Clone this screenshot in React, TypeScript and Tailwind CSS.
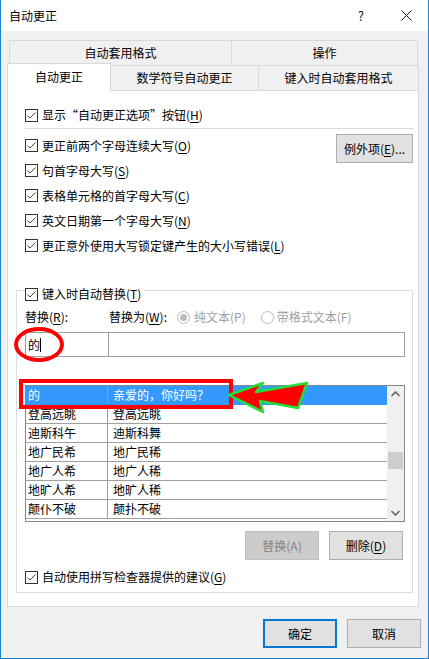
import React from 'react';

const rows: [string, string][] = [
  ['的', '亲爱的，你好吗？'],
  ['登高远眺', '登高远眺'],
  ['迪斯科午', '迪斯科舞'],
  ['地广民希', '地广民稀'],
  ['地广人希', '地广人稀'],
  ['地旷人希', '地旷人稀'],
  ['颠仆不破', '颠扑不破'],
];

function Check() {
  return (
    <span className="w-[13px] h-[13px] border border-[#333333] bg-white flex items-center justify-center shrink-0">
      <svg width="11" height="11" viewBox="0 0 11 11">
        <path d="M1.5 5.5 L4 8 L9.5 2.5" stroke="#444444" strokeWidth="1" fill="none" />
      </svg>
    </span>
  );
}

function Label({ text, k }: { text: string; k: string }) {
  return (
    <span className="whitespace-nowrap">
      {text}(<span className="underline underline-offset-2">{k}</span>)
    </span>
  );
}

function CheckRow({ text, k, h = 'h-[25px]' }: { text: string; k: string; h?: string }) {
  return (
    <div className={`flex items-center gap-[4px] ${h}`}>
      <Check />
      <Label text={text} k={k} />
    </div>
  );
}

function Radio({ on }: { on?: boolean }) {
  return (
    <span className="w-[13px] h-[13px] rounded-full border border-[#bcbcbc] bg-white flex items-center justify-center shrink-0">
      {on && <span className="w-[7px] h-[7px] rounded-full bg-[#bcbcbc]" />}
    </span>
  );
}

export default function App() {
  return (
    <div className="relative w-[429px] h-[659px] bg-[#f0f0f0] border-l border-r border-b border-[#1883d7] flex flex-col text-[12px] leading-[16px] text-black font-['Noto_Sans_CJK_SC',sans-serif] overflow-hidden">
      {/* title bar */}
      <div className="h-[31px] bg-white flex items-center pl-[8px] shrink-0">
        <span className="text-[12px]">自动更正</span>
        <span className="ml-auto mr-[37px] text-[13px] text-[#111]">?</span>
        <svg width="11" height="11" viewBox="0 0 11 11" className="mr-[16px]">
          <path d="M0.5 0.5 L10.5 10.5 M10.5 0.5 L0.5 10.5" stroke="#111" strokeWidth="1" />
        </svg>
      </div>

      {/* tabs */}
      <div className="mt-[9px] ml-[8px] w-[409px] h-[25px] flex border-t border-[#d9d9d9]">
        <div className="w-[222px] border-l border-[#d9d9d9] flex items-center justify-center">自动套用格式</div>
        <div className="flex-1 border-l border-r border-[#d9d9d9] flex items-center justify-center">操作</div>
      </div>
      <div className="ml-[6px] w-[412px] h-[25px] flex items-end">
        <div className="relative z-10 w-[104px] h-[28px] -mb-px bg-white border-t border-l border-r border-[#d9d9d9] flex items-center justify-center pb-[2px]">
          自动更正
        </div>
        <div className="w-[148px] h-[25px] border-t border-r border-[#d9d9d9] flex items-center justify-center">数学符号自动更正</div>
        <div className="flex-1 h-[25px] border-t border-r border-[#d9d9d9] flex items-center justify-center">键入时自动套用格式</div>
      </div>

      {/* panel */}
      <div className="ml-[6px] w-[412px] h-[517px] bg-white border border-[#d9d9d9] shrink-0 flex flex-col pl-[17px]">
        <div className="mt-[14px]">
          <CheckRow text="显示“自动更正选项”按钮" k="H" h="h-[20px]" />
        </div>
        <div className="mt-[3px] w-[388px] h-px bg-[#dadada]" />
        <div className="mt-[4px] flex pr-[5px]">
          <div className="flex flex-col">
            <CheckRow text="更正前两个字母连续大写" k="O" />
            <CheckRow text="句首字母大写" k="S" />
            <CheckRow text="表格单元格的首字母大写" k="C" />
            <CheckRow text="英文日期第一个字母大写" k="N" />
            <CheckRow text="更正意外使用大写锁定键产生的大小写错误" k="L" />
          </div>
          <button className="ml-auto mt-[1px] w-[77px] h-[29px] bg-[#e1e1e1] border border-[#adadad] flex items-center justify-center">
            <span>例外项(<span className="underline underline-offset-2">E</span>)...</span>
          </button>
        </div>

        {/* group box */}
        <div className="mt-[32px] -ml-[9px] w-[397px] h-[303px] border border-[#dcdcdc] flex flex-col pl-[8px]">
          <div className="-mt-[6px] w-fit bg-white pr-[3px] h-[18px] flex items-center gap-[4px]">
            <Check />
            <Label text="键入时自动替换" k="T" />
          </div>
          <div className="mt-[4px] h-[20px] flex items-center">
            <span className="w-[84px]">替换(<span className="underline underline-offset-2">R</span>):</span>
            <span className="w-[68px]">替换为(<span className="underline underline-offset-2">W</span>):</span>
            <div className="flex items-center gap-[4px] text-[#a0a0a0]">
              <Radio on />
              <span>纯文本(P)</span>
            </div>
            <div className="ml-[15px] flex items-center gap-[3px] text-[#a0a0a0]">
              <Radio />
              <span>带格式文本(F)</span>
            </div>
          </div>
          <div className="mt-[5px] w-[380px] h-[25px] flex border border-[#a0a0a0]">
            <div className="w-[83px] border-r border-[#a0a0a0] flex items-center pl-[2px]">
              的<span className="w-px h-[14px] bg-black" />
            </div>
            <div className="flex-1" />
          </div>

          {/* list */}
          <div className="mt-[28px] w-[380px] h-[137px] border border-[#828790] flex overflow-hidden">
            <div className="flex-1 flex flex-col">
              {rows.map(([a, b], i) => (
                <div
                  key={i}
                  className={`h-[19px] shrink-0 flex border-b ${i === 0 ? 'bg-[#3399ff] text-white border-[#3399ff]' : 'border-[#a0a0a0]'}`}
                >
                  <div className="w-[82px] border-r border-[#a0a0a0] pl-[2px] flex items-center">{a}</div>
                  <div className="flex-1 pl-[5px] flex items-center">{b}</div>
                </div>
              ))}
            </div>
            <div className="w-[17px] bg-[#f0f0f0] flex flex-col items-center">
              <svg width="9" height="6" viewBox="0 0 9 6" className="mt-[5px]">
                <path d="M0.5 5 L4.5 1 L8.5 5" stroke="#606060" strokeWidth="1.5" fill="none" />
              </svg>
              <div className="mt-[55px] w-[15px] h-[17px] bg-[#cdcdcd]" />
              <svg width="9" height="6" viewBox="0 0 9 6" className="mt-auto mb-[5px]">
                <path d="M0.5 1 L4.5 5 L8.5 1" stroke="#606060" strokeWidth="1.5" fill="none" />
              </svg>
            </div>
          </div>

          <div className="mt-[9px] flex justify-end gap-[10px] pr-[9px]">
            <button className="w-[74px] h-[29px] bg-[#cccccc] border border-[#bfbfbf] text-[#838383]">替换(A)</button>
            <button className="w-[74px] h-[29px] bg-[#e1e1e1] border border-[#adadad]">
              删除(<span className="underline underline-offset-2">D</span>)
            </button>
          </div>
          <div className="mt-[7px]">
            <CheckRow text="自动使用拼写检查器提供的建议" k="G" h="h-[20px]" />
          </div>
        </div>
      </div>

      {/* dialog buttons */}
      <div className="mt-[12px] flex justify-end gap-[10px] pr-[7px]">
        <button className="w-[74px] h-[29px] bg-[#e1e1e1] border-2 border-[#0078d7]">确定</button>
        <button className="w-[74px] h-[29px] bg-[#e1e1e1] border border-[#adadad]">取消</button>
      </div>

      {/* annotations */}
      <div className="absolute left-[13px] top-[327px] w-[50px] h-[35px] rounded-[50%] border-[4px] border-[#ff0000]" />
      <div className="absolute left-[18px] top-[379px] w-[214px] h-[30px] border-[4px] border-[#ff0000]" />
      <svg className="absolute left-[224px] top-[379px]" width="86" height="36" viewBox="0 0 86 36">
        <polygon
          points="4,16 38,4 31,13 82,4 73,29 35,22 38,33"
          fill="#ff0000"
          stroke="#22e03a"
          strokeWidth="2.5"
          strokeLinejoin="round"
        />
      </svg>
    </div>
  );
}
